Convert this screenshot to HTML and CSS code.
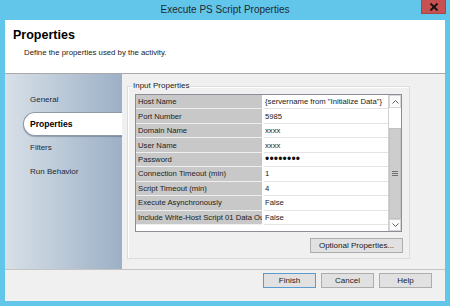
FILE: index.html
```html
<!DOCTYPE html>
<html>
<head>
<meta charset="utf-8">
<link rel="stylesheet" href="styles.css">
</head>
<body>
<div class="window">
  <div class="titlebar">
    <span class="title">Execute PS Script Properties</span>
    <div class="close">
      <svg width="10" height="8" viewBox="0 0 10 8"><path d="M1.5 0.5 L8.5 7.5 M8.5 0.5 L1.5 7.5" stroke="#111" stroke-width="1.8" fill="none"/></svg>
    </div>
  </div>
  <div class="client">
    <div class="header">
      <h1 class="h-title">Properties</h1>
      <p class="h-sub">Define the properties used by the activity.</p>
    </div>
    <div class="main">
      <nav class="sidebar">
        <div class="nav-item">General</div>
        <div class="nav-item active">Properties</div>
        <div class="nav-item">Filters</div>
        <div class="nav-item">Run Behavior</div>
      </nav>
      <section class="panel">
        <fieldset class="group">
          <legend class="legend">Input Properties</legend>
          <div class="grid-frame">
            <div class="rows">
              <div class="row"><div class="lbl">Host Name</div><div class="val">{servername from "Initialize Data"}</div></div>
              <div class="row"><div class="lbl">Port Number</div><div class="val">5985</div></div>
              <div class="row"><div class="lbl">Domain Name</div><div class="val">xxxx</div></div>
              <div class="row"><div class="lbl">User Name</div><div class="val">xxxx</div></div>
              <div class="row"><div class="lbl">Password</div><div class="val pw">••••••••</div></div>
              <div class="row"><div class="lbl">Connection Timeout (min)</div><div class="val">1</div></div>
              <div class="row"><div class="lbl">Script Timeout (min)</div><div class="val">4</div></div>
              <div class="row"><div class="lbl">Execute Asynchronously</div><div class="val">False</div></div>
              <div class="row"><div class="lbl">Include Write-Host Script 01 Data Output</div><div class="val">False</div></div>
            </div>
            <div class="scrollbar">
              <div class="sb-btn">
                <svg width="7" height="4" viewBox="0 0 7 4"><path d="M0.5 3.5 L3.5 0.5 L6.5 3.5" stroke="#606060" stroke-width="1" fill="none"/></svg>
              </div>
              <div class="sb-track"></div>
              <div class="sb-thumb">
                <svg width="6" height="5" viewBox="0 0 6 5"><path d="M0 0.5 H6 M0 2.5 H6 M0 4.5 H6" stroke="#707070" stroke-width="1"/></svg>
              </div>
              <div class="sb-btn down">
                <svg width="7" height="4" viewBox="0 0 7 4"><path d="M0.5 0.5 L3.5 3.5 L6.5 0.5" stroke="#606060" stroke-width="1" fill="none"/></svg>
              </div>
            </div>
          </div>
          <div class="opt-row"><button class="btn opt">Optional Properties...</button></div>
        </fieldset>
      </section>
    </div>
    <div class="footer">
      <button class="btn default">Finish</button>
      <button class="btn">Cancel</button>
      <button class="btn">Help</button>
    </div>
  </div>
</div>
</body>
</html>
```

FILE: styles.css
```css
* { box-sizing: border-box; }
html, body { margin: 0; padding: 0; }
body {
  width: 450px;
  height: 306px;
  overflow: hidden;
  background: #62c6ea;
  font-family: "Liberation Sans", Arial, sans-serif;
  color: #1a1a1a;
}
.window {
  width: 450px;
  height: 306px;
  display: flex;
  flex-direction: column;
}
.titlebar {
  position: relative;
  height: 20px;
  flex: none;
  display: flex;
  align-items: center;
  justify-content: center;
}
.title {
  font-size: 10px;
  color: #1e2a33;
  line-height: 20px;
}
.close {
  position: absolute;
  right: 4px;
  top: 0;
  width: 25px;
  height: 14px;
  background: #c75050;
  border: 1px solid #a84545;
  border-top: none;
  display: flex;
  align-items: center;
  justify-content: center;
}
.client {
  margin: 0 5px;
  height: 281px;
  display: flex;
  flex-direction: column;
  background: #f0f0f0;
}
.header {
  height: 54px;
  flex: none;
  background: #fff;
  border-bottom: 1px solid #a9a9a9;
  padding: 8px 0 0 8px;
}
.h-title {
  margin: 0;
  font-size: 12.5px;
  line-height: 15px;
  font-weight: bold;
  color: #000;
}
.h-sub {
  margin: 5px 0 0 11px;
  font-size: 7.8px;
  line-height: 10px;
  color: #222;
}
.main {
  height: 195px;
  flex: none;
  display: flex;
}
.sidebar {
  width: 117px;
  flex: none;
  background: linear-gradient(to right, #d8e0e8, #9cb0c6);
  padding: 14px 0 0 18px;
  display: flex;
  flex-direction: column;
}
.nav-item {
  height: 24px;
  line-height: 24px;
  padding-left: 7px;
  font-size: 8px;
  color: #1c2a38;
}
.nav-item.active {
  background: #fff;
  border: 1px solid #8e99a6;
  border-right: none;
  border-radius: 12px 0 0 12px;
  font-weight: bold;
  font-size: 8.6px;
  line-height: 22px;
  padding-left: 6px;
  color: #000;
  box-shadow: 0 1px 1px rgba(60, 70, 90, 0.35);
  margin-right: -1px;
}
.panel {
  flex: 1;
  background: #f0f0f0;
  padding: 7px 0 0 5px;
}
.group {
  margin: 0;
  width: 283px;
  height: 178px;
  border: 1px solid #dcdcdc;
  padding: 3px 7px 0 7px;
  box-shadow: inset 1px 1px 0 #fff;
}
.legend {
  font-size: 8px;
  line-height: 10px;
  padding: 0 1px;
  margin-left: -3px;
  color: #222;
}
.grid-frame {
  height: 138px;
  border: 1px solid #8a8f96;
  background: #fff;
  display: flex;
}
.rows {
  flex: 1;
  display: flex;
  flex-direction: column;
  overflow: hidden;
}
.row {
  height: 14.44px;
  flex: none;
  display: grid;
  grid-template-columns: 126px 1fr;
  column-gap: 2px;
  font-size: 7.7px;
}
.lbl {
  background: #c8c8c8;
  border-bottom: 1px solid #efefef;
  padding-left: 2px;
  white-space: nowrap;
  overflow: hidden;
  display: flex;
  align-items: center;
  color: #1c1c1c;
}
.val {
  border-bottom: 1px solid #e4e4e4;
  padding-left: 1px;
  white-space: nowrap;
  overflow: hidden;
  display: flex;
  align-items: center;
  color: #1a1a1a;
}
.val.pw {
  font-size: 12px;
  letter-spacing: 0.2px;
  color: #111;
}
.scrollbar {
  width: 13px;
  flex: none;
  display: flex;
  flex-direction: column;
  border-left: 1px solid #d0d0d0;
  background: #fff;
}
.sb-btn {
  height: 13px;
  flex: none;
  border: 1px solid #d6d6d6;
  background: #fafafa;
  display: flex;
  align-items: center;
  justify-content: center;
}
.sb-btn.down { height: 12px; }
.sb-track {
  height: 20px;
  flex: none;
  background: #fff;
}
.sb-thumb {
  flex: 1;
  background: #cdcdcd;
  border: 1px solid #c2c2c2;
  display: flex;
  align-items: center;
  justify-content: center;
}
.opt-row {
  display: flex;
  justify-content: flex-end;
  margin: 6px -1px 0 0;
}
.btn {
  font-family: "Liberation Sans", Arial, sans-serif;
  font-size: 8px;
  color: #1a1a1a;
  height: 15px;
  padding: 0;
  background: #e1e1e1;
  border: 1px solid #adadad;
  border-radius: 0;
  line-height: 13px;
}
.btn.opt { width: 93px; }
.footer {
  flex: 1;
  border-top: 1px solid #c4c4c4;
  background: #f0f0f0;
  display: flex;
  justify-content: flex-end;
  align-items: flex-start;
  gap: 5px;
  padding: 3px 13px 0 0;
}
.footer .btn { width: 53px; }
.btn.default { border-color: #5a9bd0; }
```
